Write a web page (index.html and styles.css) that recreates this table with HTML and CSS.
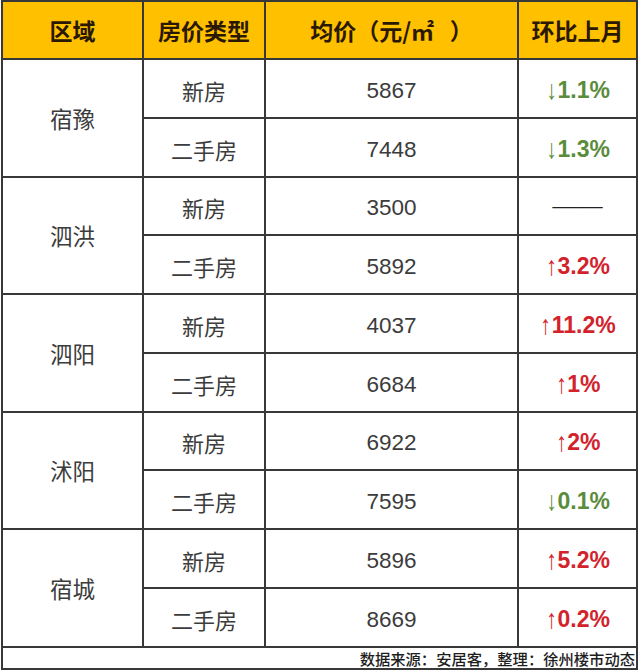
FILE: index.html
```html
<!DOCTYPE html>
<html lang="zh-CN">
<head>
<meta charset="utf-8">
<title>房价表</title>
<link rel="stylesheet" href="styles.css">
</head>
<body>
<div class="sheet">
  <div class="cell head">区域</div>
  <div class="cell head">房价类型</div>
  <div class="cell head">均价（元/㎡&nbsp;&nbsp;&nbsp;）</div>
  <div class="cell head">环比上月</div>

  <div class="cell region">宿豫</div>
  <div class="cell kind">新房</div>
  <div class="cell num">5867</div>
  <div class="cell chg down"><span class="arr">↓</span>1.1%</div>
  <div class="cell kind">二手房</div>
  <div class="cell num">7448</div>
  <div class="cell chg down"><span class="arr">↓</span>1.3%</div>

  <div class="cell region">泗洪</div>
  <div class="cell kind">新房</div>
  <div class="cell num">3500</div>
  <div class="cell chg flat">——</div>
  <div class="cell kind">二手房</div>
  <div class="cell num">5892</div>
  <div class="cell chg up"><span class="arr">↑</span>3.2%</div>

  <div class="cell region">泗阳</div>
  <div class="cell kind">新房</div>
  <div class="cell num">4037</div>
  <div class="cell chg up"><span class="arr">↑</span>11.2%</div>
  <div class="cell kind">二手房</div>
  <div class="cell num">6684</div>
  <div class="cell chg up"><span class="arr">↑</span>1%</div>

  <div class="cell region">沭阳</div>
  <div class="cell kind">新房</div>
  <div class="cell num">6922</div>
  <div class="cell chg up"><span class="arr">↑</span>2%</div>
  <div class="cell kind">二手房</div>
  <div class="cell num">7595</div>
  <div class="cell chg down"><span class="arr">↓</span>0.1%</div>

  <div class="cell region">宿城</div>
  <div class="cell kind">新房</div>
  <div class="cell num">5896</div>
  <div class="cell chg up"><span class="arr">↑</span>5.2%</div>
  <div class="cell kind">二手房</div>
  <div class="cell num">8669</div>
  <div class="cell chg up"><span class="arr">↑</span>0.2%</div>

  <div class="cell foot">数据来源：安居客，整理：徐州楼市动态</div>
</div>
</body>
</html>
```

FILE: styles.css
```css
html, body {
  margin: 0;
  padding: 0;
  background: #ffffff;
}

.sheet {
  margin-left: 1px;
  width: 637px;
  box-sizing: border-box;
  padding: 2px;
  background: #383838;
  display: grid;
  grid-template-columns: 139px 120px 251px 117px;
  grid-template-rows: 56px repeat(10, 56.77px) 20.6px;
  gap: 2px;
  font-family: "Noto Sans CJK SC", "Liberation Sans", sans-serif;
}

.cell {
  background: #ffffff;
  display: flex;
  align-items: center;
  justify-content: center;
  color: #3c3c3c;
  white-space: nowrap;
}

.head {
  background: #ffc000;
  color: #2a1800;
  font-size: 23px;
  font-weight: 700;
}

.region {
  grid-row: span 2;
  font-size: 22.5px;
}

.kind {
  font-size: 22px;
  padding-top: 3px;
}

.num {
  font-family: "Liberation Sans", Arial, sans-serif;
  font-size: 22.5px;
  padding-top: 5px;
}

.chg {
  font-family: "Liberation Sans", Arial, sans-serif;
  font-size: 23px;
  font-weight: 700;
  padding-top: 4px;
}

.arr {
  font-weight: 400;
  font-size: 27px;
  line-height: 1;
  display: inline-block;
  transform: scaleX(0.8);
  margin-right: -1px;
}

.down {
  color: #5a8c3c;
}

.up {
  color: #d2232c;
}

.flat {
  color: #222222;
  font-weight: 400;
  font-family: "Liberation Serif", serif;
  font-size: 25px;
  padding-top: 0;
}

.foot {
  grid-column: 1 / -1;
  justify-content: flex-end;
  font-size: 15.3px;
  font-weight: 500;
  color: #1e1e1e;
  padding-right: 1px;
}
```
